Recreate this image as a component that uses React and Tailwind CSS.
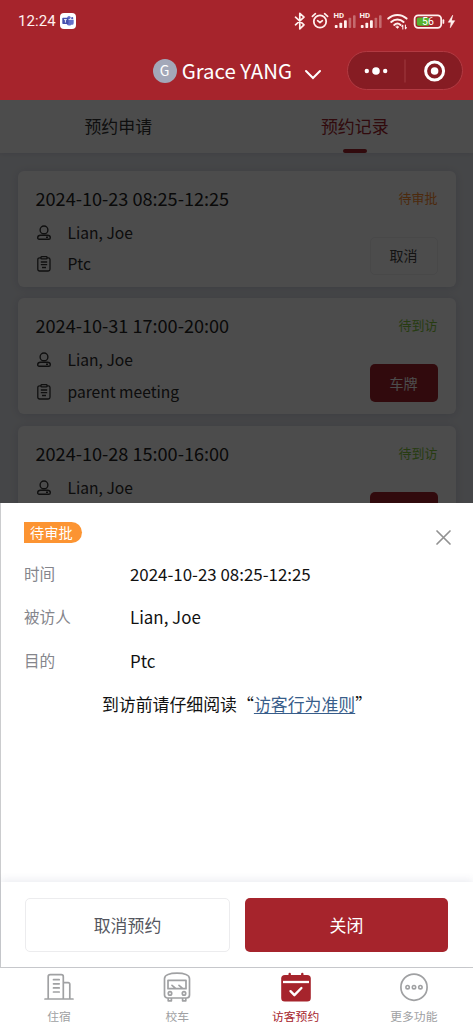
import React, { useState } from 'react';

const bookings = [
    { time: '2024-10-23 08:25-12:25', host: 'Lian, Joe', purpose: 'Ptc', pending: true },
    { time: '2024-10-31 17:00-20:00', host: 'Lian, Joe', purpose: 'parent meeting', pending: false },
    { time: '2024-10-28 15:00-16:00', host: 'Lian, Joe', purpose: 'Ptc', pending: false },
];

const StatusIcons = () => (
    <svg width="164" height="20" viewBox="0 0 164 20" fill="none" stroke="#fff0ee" strokeLinecap="round" strokeLinejoin="round">
        {/* bluetooth */}
        <path d="M1.5 6.2l8.5 7.6-4.2 4V2.3L10 6.2 1.5 13.8" strokeWidth="1.7" />
        {/* alarm */}
        <circle cx="26" cy="10.5" r="6.2" strokeWidth="1.8" />
        <path d="M23.6 9.7l2.4 2 2.4-2M18.4 5.4l3-2.7M33.6 5.4l-3-2.7" strokeWidth="1.7" />
        {/* two signal meters */}
        {[40, 66].map((x) => (
            <g key={x} stroke="none" fill="#fff0ee">
                <text x={x - 0.5} y="7.2" fontSize="7.2" fontWeight="700" textLength="10.6" lengthAdjust="spacingAndGlyphs" fontFamily="Roboto, sans-serif">HD</text>
                <rect x={x + 0.8} y="14" width="2.8" height="3" rx="0.8" />
                <rect x={x + 5.4} y="11.8" width="2.8" height="5.2" rx="0.8" />
                <rect x={x + 10} y="9.3" width="2.8" height="7.7" rx="0.8" />
                <rect x={x + 14.6} y="6.8" width="2.6" height="10.2" rx="0.8" opacity="0.35" />
                <rect x={x + 19} y="4.3" width="2.6" height="12.7" rx="0.8" opacity="0.35" />
            </g>
        ))}
        {/* wifi */}
        <path d="M94.2 7.6c5.2-4.9 13.2-4.9 18.4 0M97.2 10.9c3.6-3.3 8.8-3.3 12.4 0M100.2 13.9c2-1.7 4.4-1.7 6.4 0" strokeWidth="2" />
        <path d="M101.9 16l1.5 1.4 1.5-1.4-1.5-1z" fill="#fff0ee" strokeWidth="0.6" />
        <path d="M108.8 18v-3.8l-1 1.2M111.4 14v3.8l1-1.2" strokeWidth="1.1" />
        {/* battery */}
        <rect x="120.6" y="4.3" width="26.6" height="12.6" rx="3.6" strokeWidth="1.8" />
        <rect x="122.8" y="6.5" width="12.5" height="8.2" rx="1.6" fill="#55b32e" stroke="none" />
        <path d="M149.4 9.2v2.8" strokeWidth="1.7" />
        <text x="133.9" y="14.4" textAnchor="middle" fontSize="10.5" fill="#fff" stroke="none" fontFamily="Roboto, sans-serif">56</text>
        <path d="M158.5 4.5l-4.2 6.7h2.8l-.8 5.5 4.4-7h-3z" fill="#fff0ee" strokeWidth="0.6" />
    </svg>
);

const TeamsIcon = () => (
    <svg width="16" height="16" viewBox="0 0 16 16" className="ml-[4px]">
        <rect width="16" height="16" rx="4" fill="#fff" />
        <circle cx="9" cy="4.6" r="1.7" fill="#6571c9" />
        <circle cx="12.2" cy="5.2" r="1.1" fill="#5059b5" />
        <path d="M6.5 6.8h7.2v3.1a1.9 1.9 0 0 1-2.4 1.8 2.9 2.9 0 0 1-4.8-1z" fill="#6571c9" />
        <rect x="2.3" y="4.8" width="6.2" height="6.2" rx="0.7" fill="#4650ae" />
        <path d="M4 6.6h2.8M5.4 6.6v3" stroke="#fff" strokeWidth="0.9" />
    </svg>
);

const PersonIcon = () => (
    <svg width="14" height="16" viewBox="0 0 14 16" fill="none" stroke="#333" strokeWidth="1.4" className="ml-[1px]">
        <circle cx="7" cy="4.9" r="3.9" />
        <path d="M3.6 10.2h6.8c2.2 0 2.9 1 2.9 2.5 0 1-.5 1.6-1.5 1.6H2.2c-1 0-1.5-.6-1.5-1.6 0-1.5.7-2.5 2.9-2.5zM9 12.2h2" />
    </svg>
);

const ClipboardIcon = () => (
    <svg width="14" height="16" viewBox="0 0 14 16" fill="none" stroke="#333" strokeWidth="1.3" className="ml-[1px]">
        <rect x="0.8" y="1.8" width="12.2" height="13.2" rx="1.8" />
        <rect x="4" y="0.7" width="6" height="2.2" rx="0.6" fill="#fff" />
        <path d="M3.8 6h6.4M3.8 8.7h6.4M5 11.5h4" />
    </svg>
);

const BuildingIcon = () => (
    <svg width="30" height="30" viewBox="0 0 30 30" fill="none" stroke="#a0a1a3" strokeWidth="1.7" strokeLinecap="round">
        <path d="M1 27h28M4.2 27V4.7a2 2 0 0 1 2-2h11.1a2 2 0 0 1 2 2V27M19.3 10.7h4.9a1.6 1.6 0 0 1 1.6 1.6V27M9.5 7.7h5.7M9.5 11.8h5.7M9.5 15.9h5.7M9.5 20h5.7" />
    </svg>
);

const BusIcon = () => (
    <svg width="30" height="30" viewBox="0 0 30 30" fill="none" stroke="#a0a1a3" strokeWidth="1.7" strokeLinecap="round" strokeLinejoin="round">
        <path d="M2.5 6.7c0-4 5.5-5.5 12.5-5.5s12.5 1.5 12.5 5.5v16.3a3 3 0 0 1-3 3h-19a3 3 0 0 1-3-3zM6.2 26.2v2.6h3.2v-2.6M20.6 26.2v2.6h3.2v-2.6M6 8.3h18v8.4H6zM10 13.4l3.3 2.7M17 13.4l3.3 2.7" />
        <circle cx="8" cy="21.4" r="1.7" />
        <circle cx="22" cy="21.4" r="1.7" />
    </svg>
);

const CalendarIcon = () => (
    <svg width="30" height="30" viewBox="0 0 30 30" fill="none" strokeLinecap="round" strokeLinejoin="round">
        <path d="M8.7 2v4M21.3 2v4" stroke="#a6242c" strokeWidth="2.4" />
        <rect x="0.2" y="3" width="29.6" height="26.6" rx="3.6" fill="#a6242c" />
        <path d="M2 10h26" stroke="#fff" strokeWidth="2.3" strokeLinecap="butt" />
        <path d="M9.5 19.2l3.9 4 7-7.2" stroke="#fff" strokeWidth="2.4" />
    </svg>
);

const MoreIcon = () => (
    <svg width="30" height="30" viewBox="0 0 30 30" fill="none" stroke="#a0a1a3" strokeWidth="1.6">
        <circle cx="15" cy="15.2" r="13.1" strokeWidth="1.7" />
        <circle cx="8.6" cy="15.2" r="1.7" />
        <circle cx="15" cy="15.2" r="1.7" />
        <circle cx="21.4" cy="15.2" r="1.7" />
    </svg>
);

const tabs = [
    { name: '住宿', icon: <BuildingIcon /> },
    { name: '校车', icon: <BusIcon /> },
    { name: '访客预约', icon: <CalendarIcon /> },
    { name: '更多功能', icon: <MoreIcon /> },
];

const BookingCard = ({ booking }) => (
    <div className="flex justify-between h-[116px] shrink-0 rounded-md bg-white pl-[18px] pr-[18px] pt-[13px] pb-[12px] shadow-[0_1px_8px_rgba(30,50,90,0.14)]">
        <div>
            <p className="text-[18.1px] leading-[28px] whitespace-nowrap text-[#222]">{booking.time}</p>
            <div className="flex items-center mt-[5px] h-[32px] text-[15.6px] text-[#2c2c2c]">
                <PersonIcon />
                <span className="pl-[17px]">{booking.host}</span>
            </div>
            <div className="flex items-center h-[31px] text-[15.6px] text-[#2c2c2c]">
                <ClipboardIcon />
                <span className="pl-[17px]">{booking.purpose}</span>
            </div>
        </div>
        <div className="flex flex-col items-end justify-between">
            <span className={`text-[13px] leading-[27px] ${booking.pending ? 'text-[#ff8c2e]' : 'text-[#82c83c]'}`}>
                {booking.pending ? '待审批' : '待到访'}
            </span>
            <button
                className={`w-[68px] h-[38px] rounded-[5px] text-[14px] ${booking.pending ? 'border border-[#f0f0f2] text-[#444]' : 'bg-[#a6242c] text-white'}`}
            >
                {booking.pending ? '取消' : '车牌'}
            </button>
        </div>
    </div>
);

const DetailRow = ({ label, children }) => (
    <div className="flex items-center h-[43.3px]">
        <span className="w-[106px] text-[15.6px] text-[#85868c]">{label}</span>
        <span className="text-[16.9px] text-[#111]">{children}</span>
    </div>
);

const App = () => {
    const [open, setOpen] = useState(true);

    return (
        <div className="flex flex-col w-full h-[1024px] overflow-hidden bg-white font-['Noto_Sans_CJK_SC',sans-serif]">
            <header className="h-[100px] shrink-0 bg-[#a6242c] text-white">
                <div className="flex items-center justify-between h-[42px] pl-[18px] pr-[15px]">
                    <div className="flex items-center">
                        <span className="font-['Roboto',sans-serif] text-[15px] tracking-[0.1px] text-[#fff0ee] pt-[1px]">12:24</span>
                        <TeamsIcon />
                    </div>
                    <StatusIcons />
                </div>
                <div className="flex items-center justify-end h-[58px] pr-[10px] pb-[1px]">
                    <span className="flex items-center justify-center w-6 h-6 rounded-full bg-[#a3a8b9] text-[14px]">G</span>
                    <span className="ml-[5px] text-[20.4px] whitespace-nowrap">Grace YANG</span>
                    <svg width="18" height="12" viewBox="0 0 18 12" fill="none" stroke="#fff" strokeWidth="2" strokeLinecap="round" className="ml-[12px] mt-[8px]">
                        <path d="M2 2l7 7 7-7" />
                    </svg>
                    <div className="flex items-center ml-[25px] w-[116px] h-[39px] rounded-full border border-[#b23a42] bg-[#861c23]">
                        <svg width="114" height="38" viewBox="0 0 114 38" fill="#fff">
                            <circle cx="18.8" cy="19" r="2.2" />
                            <circle cx="28" cy="19" r="3.8" />
                            <circle cx="37.2" cy="19" r="2.2" />
                            <path d="M57 7.5v23" stroke="#a03a40" />
                            <circle cx="86.6" cy="19" r="9" fill="none" stroke="#fff" strokeWidth="3" />
                            <circle cx="86.6" cy="19" r="3.8" />
                        </svg>
                    </div>
                </div>
            </header>

            <main className="relative h-[867.5px] shrink-0 overflow-hidden bg-[#e8eaf0]">
                <div className="flex h-[53px] bg-white text-[16.9px] text-center shadow-[0_1px_4px_rgba(30,50,90,0.1)]">
                    <div className="flex-1 pt-[13px] leading-[26px] text-[#333]">预约申请</div>
                    <div className="flex flex-1 flex-col items-center pt-[13px] leading-[26px] text-[#a6242c]">
                        预约记录
                        <span className="mt-[10px] w-6 h-[4px] rounded-full bg-[#a6242c]"></span>
                    </div>
                </div>
                <div className="flex flex-col gap-[11.5px] px-[17.5px] pt-[17.5px]">
                    {bookings.map((booking) => (
                        <BookingCard key={booking.time} booking={booking} />
                    ))}
                </div>

                {open && (
                    <div className="absolute inset-0 flex flex-col justify-end bg-black/70">
                        <section className="flex flex-col h-[464.5px] border-l border-b border-[#cbccce] bg-white">
                            <div className="flex justify-between pl-[23px] pr-[21px] pt-[19px]">
                                <span className="w-[58px] h-[21px] rounded-r-full bg-[#fc9432] pl-[6px] text-[14.2px] leading-[20px] text-white">待审批</span>
                                <button onClick={() => setOpen(false)} className="mt-[7px]">
                                    <svg width="17" height="17" viewBox="0 0 17 17" fill="none" stroke="#929292" strokeWidth="1.7" strokeLinecap="round">
                                        <path d="M2 2l13 13M15 2L2 15" />
                                    </svg>
                                </button>
                            </div>
                            <div className="pl-[23px] mt-[6px]">
                                <DetailRow label="时间">2024-10-23 08:25-12:25</DetailRow>
                                <DetailRow label="被访人">Lian, Joe</DetailRow>
                                <DetailRow label="目的">Ptc</DetailRow>
                            </div>
                            <p className="mt-[9px] text-center text-[16.9px] leading-[26px] text-[#111]">
                                到访前请仔细阅读“<a className="text-[#385d8a] underline underline-offset-2">访客行为准则</a>”
                            </p>
                            <div className="flex gap-[15px] mt-auto h-[85px] pl-[24px] pr-[25px] pt-[16px] shadow-[0_-2px_8px_rgba(60,70,120,0.1)]">
                                <button className="flex-1 h-[54px] rounded-[5px] border border-[#ececee] text-[16.9px] text-[#54565e]">取消预约</button>
                                <button onClick={() => setOpen(false)} className="flex-1 h-[54px] rounded-[5px] bg-[#a6242c] text-[16.9px] text-white">
                                    关闭
                                </button>
                            </div>
                        </section>
                    </div>
                )}
            </main>

            <nav className="flex flex-1 bg-white">
                {tabs.map((tab) => (
                    <div
                        key={tab.name}
                        className={`flex flex-1 flex-col items-center pt-[4.5px] text-[11.8px] leading-[18px] ${tab.name === '访客预约' ? 'text-[#a6242c]' : 'text-[#a0a1a3]'}`}
                    >
                        {tab.icon}
                        <span className="mt-[5px]">{tab.name}</span>
                    </div>
                ))}
            </nav>
        </div>
    );
};

export default App;
